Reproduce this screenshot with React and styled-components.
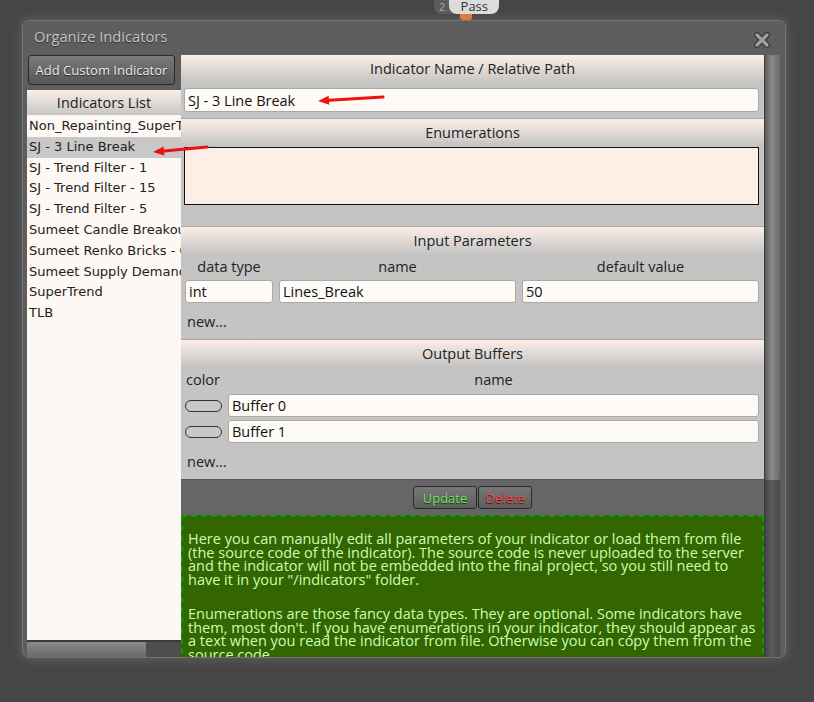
import React from "react";
import styled, { createGlobalStyle } from "styled-components";

const GlobalStyle = createGlobalStyle`
  html, body {
    margin: 0;
    padding: 0;
    background: #464646;
    height: 100%;
    overflow: hidden;
  }
  * { box-sizing: border-box; }
`;

const Page = styled.div`
  width: 814px;
  height: 702px;
  position: relative;
  font-family: "Open Sans", "Noto Sans", sans-serif;
`;

const TopBar = styled.div`
  height: 20px;
  display: flex;
  padding-left: 434px;
`;

const Badge = styled.div`
  display: flex;
  height: 14px;
  align-items: center;
`;

const BadgeCount = styled.span`
  background: #5c5c5c;
  color: #aaa;
  font-size: 11px;
  height: 14px;
  line-height: 14px;
  padding: 0 9px 0 5px;
  border-radius: 0 0 0 7px;
  margin-right: -5px;
`;

const BadgePass = styled.span`
  background: #dcdcdc;
  color: #333;
  font-size: 13px;
  height: 14px;
  line-height: 13px;
  width: 50px;
  text-align: center;
  border-radius: 0 0 8px 8px;
  position: relative;
  &::after {
    content: "";
    position: absolute;
    left: 11px;
    top: 14px;
    width: 12px;
    height: 6px;
    background: #e07a3a;
    border-radius: 0 0 3px 3px;
  }
`;

const Dialog = styled.div`
  margin-left: 22px;
  width: 764px;
  height: 638px;
  background: #5e5e5e;
  border: 1px solid #747474;
  border-radius: 7px;
  box-shadow: 0 0 10px 2px rgba(160, 160, 160, 0.25);
  display: flex;
  flex-direction: column;
  overflow: hidden;
`;

const TitleRow = styled.div`
  height: 34px;
  display: flex;
  align-items: center;
  justify-content: space-between;
  padding: 0 15px 0 11px;
`;

const Title = styled.div`
  color: #c4c4c4;
  font-size: 14.7px;
  margin-top: -4px;
  text-shadow: 0 1px 1px #333;
`;

const CloseButton = styled.div`
  width: 16px;
  height: 16px;
  margin-top: 4px;
  display: flex;
`;

const Body = styled.div`
  flex: 1;
  display: flex;
  padding: 0 5px 0 4px;
  min-height: 0;
`;

const LeftCol = styled.div`
  width: 154px;
  display: flex;
  flex-direction: column;
  & > * { flex-shrink: 0; }
`;

const AddButton = styled.button`
  margin-left: 1px;
  margin-bottom: 5px;
  width: 147px;
  height: 30px;
  background: linear-gradient(#7a7a7a, #575757);
  border: 1px solid #2a2a2a;
  border-radius: 3px;
  color: #eee;
  font-family: inherit;
  font-size: 13px;
  text-shadow: 0 1px 1px #222;
  padding: 0;
  white-space: nowrap;
`;

const SectionHeader = styled.div`
  height: ${(p) => p.$h || 27}px;
  border-top: ${(p) => (p.$noLine ? "none" : "1px solid #a8a8a8")};
  background: linear-gradient(#fdeee6, #c6c6c6);
  color: #222;
  font-size: 14.5px;
  display: flex;
  align-items: center;
  justify-content: center;
`;

const List = styled.div`
  flex: 1 1 auto !important;
  min-height: 0;
  background: #fdf8f4;
  font-family: "DejaVu Sans", sans-serif;
  font-size: 13px;
  color: #222;
  padding-top: 1px;
  overflow: hidden;
`;

const ListItem = styled.div`
  height: 20.8px;
  line-height: 20.8px;
  padding-left: 2px;
  white-space: nowrap;
  background: ${(p) => (p.$selected ? "#c8c8c8" : "transparent")};
`;

const HScroll = styled.div`
  height: 17px;
  display: flex;
  border-top: 2px solid #3a3a3a;
`;

const HThumb = styled.div`
  width: 119px;
  background: linear-gradient(#8a8a8a, #6a6a6a);
`;

const HTrack = styled.div`
  flex: 1;
  background: #4e4e4e;
`;

const RightCol = styled.div`
  flex: 1;
  display: flex;
  min-width: 0;
`;

const Panel = styled.div`
  flex: 1;
  overflow: hidden;
  display: flex;
  flex-direction: column;
  & > * { flex-shrink: 0; }
`;

const VScroll = styled.div`
  width: 16px;
  display: flex;
  flex-direction: column;
  background: linear-gradient(90deg, #444, #5a5a5a 40%, #4a4a4a);
  border-left: 1px solid #3a3a3a;
`;

const VThumb = styled.div`
  height: 425px;
  background: linear-gradient(90deg, #5c5c5c, #8a8a8a 45%, #6a6a6a);
  border-radius: 0 0 2px 2px;
`;

const SectionBody = styled.div`
  background: #c4c4c4;
  padding: ${(p) => p.$pad || "6px 5px 6px 3px"};
  display: flex;
  flex-direction: column;
`;

const TextInput = styled.div`
  height: ${(p) => p.$h || 24}px;
  background: #fefaf6;
  border: 1px solid #a9a9a9;
  border-radius: 3px;
  font-size: 14.5px;
  color: #111;
  display: flex;
  align-items: center;
  padding-left: 3px;
  flex: ${(p) => p.$flex || "none"};
  min-width: 0;
  white-space: nowrap;
`;

const TextArea = styled.div`
  height: 58px;
  background: #fdeee6;
  border: 1px solid #111;
`;

const ParamGrid = styled.div`
  display: grid;
  grid-template-columns: 88px 1fr 1fr;
  column-gap: 6px;
  row-gap: 4px;
  padding-left: 1px;
`;

const ColLabel = styled.div`
  font-size: 14.5px;
  color: #222;
  text-align: center;
  height: 19px;
  line-height: 19px;
  white-space: nowrap;
`;

const ColorLabel = styled(ColLabel)`
  width: 37px;
  text-align: left;
  padding-left: 1px;
`;

const NameLabel = styled(ColLabel)`
  flex: 1;
`;

const NewLink = styled.div`
  font-size: 14.5px;
  color: #222;
  padding-left: 3px;
  height: ${(p) => p.$h || 36}px;
  display: flex;
  align-items: center;
`;

const BufferRow = styled.div`
  display: flex;
  align-items: center;
  gap: 6px;
  padding-left: 1px;
  margin-top: ${(p) => p.$mt || 0}px;
`;

const ColorPill = styled.div`
  width: 37px;
  height: 12px;
  border: 1.5px solid #333;
  border-radius: 6px;
  background: ${(p) => p.$color || "#c8c8c8"};
`;

const ActionBar = styled.div`
  background: #666;
  border-top: 1px solid #5a5a5a;
  height: 36px;
  display: flex;
  align-items: center;
  justify-content: center;
  gap: 1px;
`;

const ActionButton = styled.button`
  height: 23px;
  width: ${(p) => p.$w}px;
  background: linear-gradient(#777, #5e5e5e);
  border: 1px solid #2a2a2a;
  border-radius: 3px;
  color: ${(p) => p.$color};
  font-family: inherit;
  font-size: 13px;
  text-shadow: 0 1px 1px #222;
  padding: 0;
`;

const HelpBox = styled.div`
  min-height: 200px;
  background: #336600;
  border: 2px dashed #119911;
  color: #c8ffb0;
  font-size: 14.5px;
  line-height: 13.7px;
  padding: 15px 5px 0 5px;
`;

const HelpPara = styled.p`
  margin: 0 0 20px 0;
`;

const ArrowLayer = styled.svg`
  position: absolute;
  left: 0;
  top: 0;
  pointer-events: none;
`;

const indicators = [
  "Non_Repainting_SuperTrend",
  "SJ - 3 Line Break",
  "SJ - Trend Filter - 1",
  "SJ - Trend Filter - 15",
  "SJ - Trend Filter - 5",
  "Sumeet Candle Breakout",
  "Sumeet Renko Bricks - Cl",
  "Sumeet Supply Demand",
  "SuperTrend",
  "TLB",
];

function Arrow({ x1, y1, x2, y2 }) {
  // x1,y1 = tail, x2,y2 = head
  const ang = Math.atan2(y2 - y1, x2 - x1);
  const len = 11;
  const wid = 4.5;
  const bx = x2 - len * Math.cos(ang);
  const by = y2 - len * Math.sin(ang);
  const px = -Math.sin(ang) * wid;
  const py = Math.cos(ang) * wid;
  return (
    <g>
      <line x1={x1} y1={y1} x2={bx} y2={by} stroke="#ee1111" strokeWidth="3" strokeLinecap="round" />
      <polygon points={`${x2},${y2} ${bx + px},${by + py} ${bx - px},${by - py}`} fill="#ee1111" />
    </g>
  );
}

export default function App() {
  return (
    <Page>
      <GlobalStyle />
      <TopBar>
        <Badge>
          <BadgeCount>2</BadgeCount>
          <BadgePass>Pass</BadgePass>
        </Badge>
      </TopBar>
      <Dialog>
        <TitleRow>
          <Title>Organize Indicators</Title>
          <CloseButton>
            <svg width="16" height="16" viewBox="0 0 16 16">
              <path d="M3 3 L13 13 M13 3 L3 13" stroke="#3a3a3a" strokeWidth="6" strokeLinecap="round" />
              <path d="M3 3 L13 13 M13 3 L3 13" stroke="#a0a0a0" strokeWidth="3.2" strokeLinecap="round" />
            </svg>
          </CloseButton>
        </TitleRow>
        <Body>
          <LeftCol>
            <AddButton>Add Custom Indicator</AddButton>
            <SectionHeader $h={25} $noLine>Indicators List</SectionHeader>
            <List>
              {indicators.map((name) => (
                <ListItem key={name} $selected={name === "SJ - 3 Line Break"}>
                  {name}
                </ListItem>
              ))}
            </List>
            <HScroll>
              <HThumb />
              <HTrack />
            </HScroll>
          </LeftCol>
          <RightCol>
            <Panel>
              <SectionHeader $noLine>Indicator Name / Relative Path</SectionHeader>
              <SectionBody>
                <TextInput>SJ - 3 Line Break</TextInput>
              </SectionBody>
              <SectionHeader>Enumerations</SectionHeader>
              <SectionBody $pad="2px 5px 21px 3px">
                <TextArea />
              </SectionBody>
              <SectionHeader>Input Parameters</SectionHeader>
              <SectionBody $pad="4px 5px 0 3px">
                <ParamGrid>
                  <ColLabel>data type</ColLabel>
                  <ColLabel>name</ColLabel>
                  <ColLabel>default value</ColLabel>
                  <TextInput $h={23}>int</TextInput>
                  <TextInput $h={23}>Lines_Break</TextInput>
                  <TextInput $h={23}>50</TextInput>
                </ParamGrid>
                <NewLink $h={36}>new...</NewLink>
              </SectionBody>
              <SectionHeader>Output Buffers</SectionHeader>
              <SectionBody $pad="4px 5px 0 3px">
                <BufferRow>
                  <ColorLabel>color</ColorLabel>
                  <NameLabel>name</NameLabel>
                </BufferRow>
                <BufferRow $mt={5}>
                  <ColorPill />
                  <TextInput $h={23} $flex="1">Buffer 0</TextInput>
                </BufferRow>
                <BufferRow $mt={3}>
                  <ColorPill />
                  <TextInput $h={23} $flex="1">Buffer 1</TextInput>
                </BufferRow>
                <NewLink $h={36}>new...</NewLink>
              </SectionBody>
              <ActionBar>
                <ActionButton $w={64} $color="#66ee55">Update</ActionButton>
                <ActionButton $w={54} $color="#ff4444">Delete</ActionButton>
              </ActionBar>
              <HelpBox>
                <HelpPara>
                  Here you can manually edit all parameters of your indicator or load them from file
                  (the source code of the indicator). The source code is never uploaded to the server
                  and the indicator will not be embedded into the final project, so you still need to
                  have it in your "/indicators" folder.
                </HelpPara>
                <HelpPara>
                  Enumerations are those fancy data types. They are optional. Some indicators have
                  them, most don't. If you have enumerations in your indicator, they should appear as
                  a text when you read the indicator from file. Otherwise you can copy them from the
                  source code.
                </HelpPara>
              </HelpBox>
            </Panel>
            <VScroll>
              <VThumb />
            </VScroll>
          </RightCol>
        </Body>
      </Dialog>
      <ArrowLayer width="814" height="702">
        <Arrow x1={383} y1={97} x2={318} y2={101} />
        <Arrow x1={207} y1={147} x2={153} y2={152} />
      </ArrowLayer>
    </Page>
  );
}
